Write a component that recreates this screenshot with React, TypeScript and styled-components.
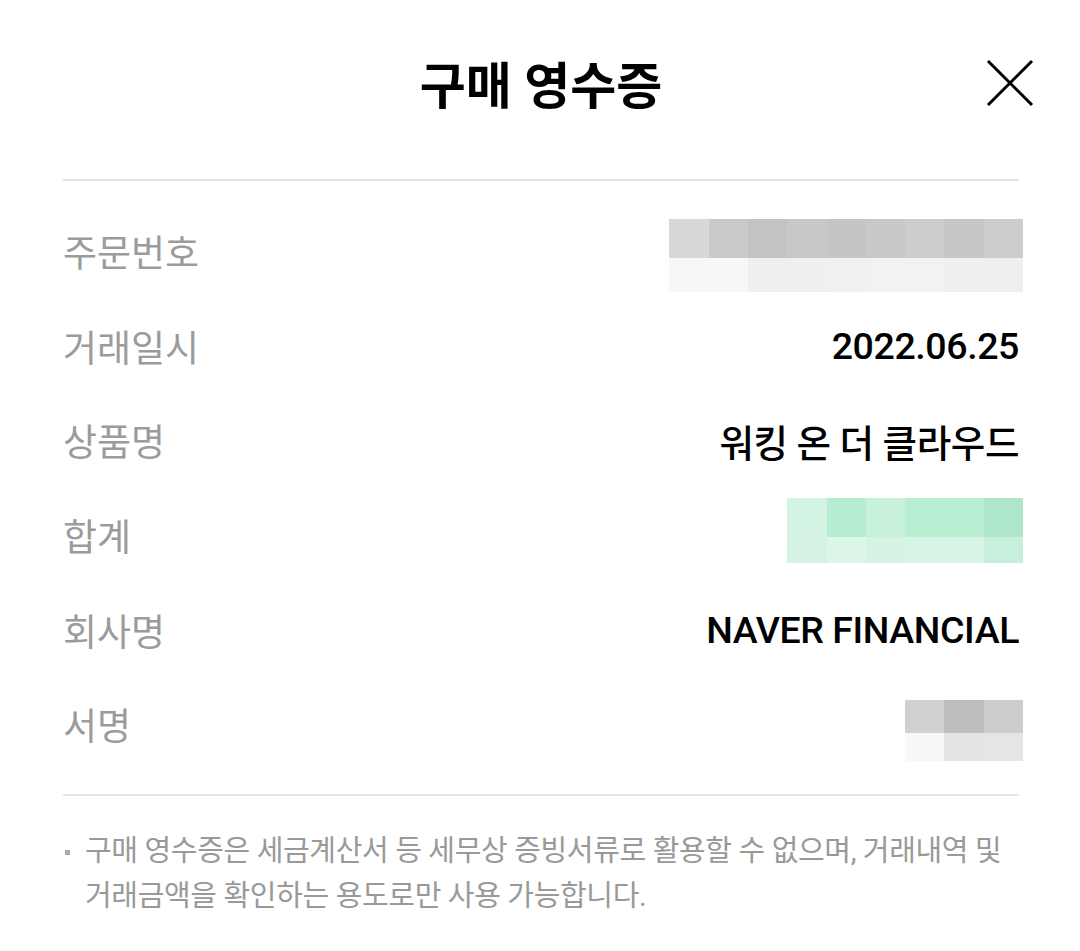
import React from 'react'
import styled, { createGlobalStyle } from 'styled-components'

const GlobalStyle = createGlobalStyle`
  html, body {
    margin: 0;
    padding: 0;
    background: #fff;
  }
  body {
    font-family: Roboto, "Noto Sans CJK KR", sans-serif;
    -webkit-font-smoothing: antialiased;
  }
`

const Page = styled.div`
  width: 1080px;
  height: 951px;
  box-sizing: border-box;
  padding: 0 61px 0 63px;
  background: #fff;
  overflow: hidden;
`

const Header = styled.header`
  position: relative;
  height: 181px;
  display: flex;
  align-items: center;
  justify-content: center;
  padding-bottom: 16px;
  box-sizing: border-box;
  border-bottom: 2px solid #e4e4e4;
`

const Title = styled.h1`
  margin: 0;
  font-size: 50px;
  font-weight: 700;
  color: #000;
`

const CloseButton = styled.button`
  position: absolute;
  right: -16px;
  top: 58px;
  width: 50px;
  height: 50px;
  padding: 0;
  border: 0;
  background: none;
  cursor: pointer;
`

const List = styled.dl`
  margin: 0;
  padding: 23px 0 22px;
  border-bottom: 2px solid #e4e4e4;
`

const Row = styled.div`
  height: 94.6px;
  display: flex;
  align-items: center;
  justify-content: space-between;
`

const Label = styled.dt`
  font-size: 37px;
  color: #9b9b9b;
  font-weight: 400;
`

const Value = styled.dd`
  margin: 0;
  font-size: 37.5px;
  color: #000;
  font-weight: 500;
  letter-spacing: -0.4px;
`

const Blur = styled.div<{ $cols: number; $shift: number }>`
  display: grid;
  grid-template-columns: repeat(${p => p.$cols}, 39.3px);
  margin-right: -4px;
  margin-top: ${p => p.$shift}px;
`

const Cell = styled.div<{ $h: number }>`
  height: ${p => p.$h}px;
`

const Notes = styled.ul`
  margin: 0;
  padding: 33px 0 0 22px;
  list-style: none;
`

const Note = styled.li`
  position: relative;
  font-size: 29px;
  line-height: 45px;
  color: #999;
  letter-spacing: -0.35px;
  word-break: keep-all;

  &::before {
    content: '';
    position: absolute;
    left: -20px;
    top: 21px;
    width: 5px;
    height: 5px;
    background: #aaa;
  }
`

type BlurProps = {
  top: string[]
  bottom: string[]
  topH: number
  bottomH: number
  shift: number
}

const Pixelated = ({ top, bottom, topH, bottomH, shift }: BlurProps) => (
  <Blur $cols={top.length} $shift={shift} aria-hidden>
    {top.map((c, i) => (
      <Cell key={'t' + i} $h={topH} style={{ background: c }} />
    ))}
    {bottom.map((c, i) => (
      <Cell key={'b' + i} $h={bottomH} style={{ background: c }} />
    ))}
  </Blur>
)

const CloseIcon = () => (
  <svg width="50" height="50" viewBox="0 0 50 50">
    <path d="M3 3 L47 47 M47 3 L3 47" stroke="#000" strokeWidth="3" fill="none" />
  </svg>
)

export default function App() {
  return (
    <>
      <GlobalStyle />
      <Page>
        <Header>
          <Title>구매 영수증</Title>
          <CloseButton aria-label="닫기">
            <CloseIcon />
          </CloseButton>
        </Header>
        <List>
          <Row>
            <Label>주문번호</Label>
            <Pixelated
              shift={8}
              topH={39}
              bottomH={34}
              top={['#d8d8d8', '#cacaca', '#c3c3c3', '#c8c8c8', '#c5c5c5', '#c8c8c8', '#cdcdcd', '#c7c7c7', '#cdcdcd']}
              bottom={['#f7f7f7', '#f7f7f7', '#efefef', '#efefef', '#f0f0f0', '#f2f2f2', '#f2f2f2', '#efefef', '#efefef']}
            />
          </Row>
          <Row>
            <Label>거래일시</Label>
            <Value>2022.06.25</Value>
          </Row>
          <Row>
            <Label>상품명</Label>
            <Value>워킹 온 더 클라우드</Value>
          </Row>
          <Row>
            <Label>합계</Label>
            <Pixelated
              shift={-10}
              topH={39}
              bottomH={26}
              top={['#d3f3e3', '#b6ecd0', '#c8f1dc', '#b8eed1', '#b8eed1', '#ade6c8']}
              bottom={['#d5f3e4', '#dcf6e8', '#d4f3e3', '#d8f4e6', '#d8f4e6', '#c8efdb']}
            />
          </Row>
          <Row>
            <Label>회사명</Label>
            <Value>NAVER FINANCIAL</Value>
          </Row>
          <Row>
            <Label>서명</Label>
            <Pixelated
              shift={12}
              topH={33}
              bottomH={28}
              top={['#d0d0d0', '#bdbdbd', '#cdcdcd']}
              bottom={['#f8f8f8', '#e4e4e4', '#e5e5e5']}
            />
          </Row>
        </List>
        <Notes>
          <Note>
            구매 영수증은 세금계산서 등 세무상 증빙서류로 활용할 수 없으며, 거래내역 및 거래금액을
            확인하는 용도로만 사용 가능합니다.
          </Note>
        </Notes>
      </Page>
    </>
  )
}
